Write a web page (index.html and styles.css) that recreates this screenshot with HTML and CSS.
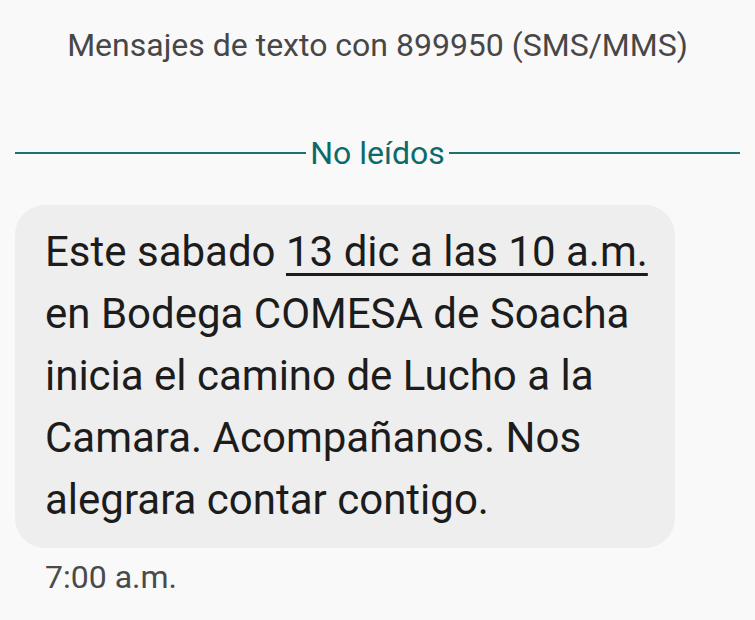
FILE: index.html
```html
<!DOCTYPE html>
<html>
<head>
    <title>Mensajes</title>
    <meta name="viewport" content="width=device-width, initial-scale=1">
    <link rel="stylesheet" href="styles.css">
</head>
<body>
    <div class="thread">
        <div class="title">Mensajes de texto con 899950 (SMS/MMS)</div>

        <div class="divider">
            <span class="line"></span>
            <span class="label">No leídos</span>
            <span class="line"></span>
        </div>

        <div class="bubble">
            Este sabado <span class="link">13 dic a las 10 a.m.</span><br>
            en Bodega COMESA de Soacha<br>
            inicia el camino de Lucho a la<br>
            Camara. Acompañanos. Nos<br>
            alegrara contar contigo.
        </div>
        <div class="time">7:00 a.m.</div>
    </div>
</body>
</html>
```

FILE: styles.css
```css
body {
    margin: 0;
    background: #f9f9f9;
    font-family: Roboto, "Noto Sans", sans-serif;
}
.thread {
    padding: 25px 0 0 0;
}
.title {
    text-align: center;
    font-size: 32px;
    line-height: 40px;
    color: #474747;
}
.divider {
    display: flex;
    align-items: center;
    margin: 68px 15px 0 15px;
    color: #0b6b6b;
}
.divider .line {
    flex: 1;
    height: 2px;
    background: #1a7373;
}
.divider .label {
    font-size: 32px;
    line-height: 40px;
    padding: 0 4px;
}
.bubble {
    margin: 32px 0 0 15px;
    width: 600px;
    padding: 16px 30px 17px 30px;
    background: #eeeeee;
    border-radius: 30px;
    font-size: 42px;
    line-height: 62px;
    color: #1c1c1c;
    white-space: nowrap;
}
.link {
    text-decoration: underline;
    text-decoration-thickness: 3px;
    text-underline-offset: 7px;
}
.time {
    margin: 9px 0 0 45px;
    font-size: 32px;
    line-height: 40px;
    color: #4a4a4a;
}
```
